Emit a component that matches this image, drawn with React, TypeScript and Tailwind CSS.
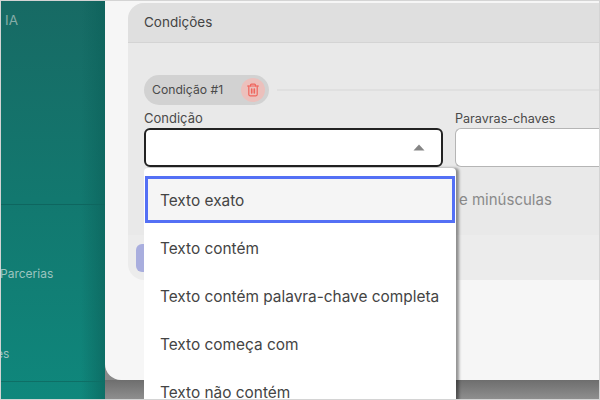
import React from "react";

const font = { fontFamily: "Inter, 'Noto Sans', sans-serif" };

function Trash() {
  return (
    <svg width="14" height="14" viewBox="0 0 14 14" fill="none" stroke="#f0645c" strokeWidth="1.2" strokeLinecap="round" strokeLinejoin="round">
      <path d="M1.5 3h11" />
      <path d="M4.5 3V2.2c0-.6.4-1 1-1h3c.6 0 1 .4 1 1V3" />
      <path d="M2.8 3v8.6c0 .7.5 1.2 1.2 1.2h6c.7 0 1.2-.5 1.2-1.2V3" />
      <path d="M5.7 6v4M8.3 6v4" strokeWidth="1.6" />
    </svg>
  );
}

const items = ["Texto contém", "Texto contém palavra-chave completa", "Texto começa com", "Texto não contém"];

export default function App() {
  return (
    <div className="w-[600px] h-[400px] overflow-hidden flex bg-[#8a8a8a] border border-[#d4d4d4] relative" style={font}>
      <aside className="w-[104px] shrink-0 h-full flex flex-col bg-gradient-to-b from-[#176a64] via-[#12786f] to-[#0f877c] relative">
        <div className="absolute inset-y-0 right-0 w-[24px] bg-gradient-to-r from-transparent to-[#0b5f58]/60" />
        <div className="h-[204px] border-b border-[#0e665f] pt-[10px] text-[13.5px] leading-[18px] text-[#85aca7] relative">
          <span className="pl-[4px]">IA</span>
        </div>
        <div className="h-[177px] border-b border-[#0e6f66] relative flex flex-col text-[12px] text-[#9cc4bf]">
          <span className="mt-[61px] leading-[16px] -ml-px">Parcerias</span>
          <span className="mt-[64px] leading-[16px] -ml-[5px]">es</span>
        </div>
      </aside>
      <main className="flex-1 flex flex-col min-w-0">
        <div className="h-[379px] bg-[#f6f6f6] rounded-bl-[16px] pl-[23px] pt-[2px] overflow-hidden shrink-0">
          <section className="h-[277px] rounded-tl-[16px] rounded-bl-[16px] bg-[#ececec] overflow-hidden flex flex-col">
            <header className="h-[40px] shrink-0 bg-[#dfdfdf] border-b border-[#d4d4d4] pl-[16px] flex items-center text-[13.5px] text-[#444]">
              Condições
            </header>
            <div className="h-[192px] shrink-0 bg-[#e9e9e9] pl-[16px] pt-[32px] flex flex-col">
              <div className="flex items-center">
                <div className="h-[30px] w-[125px] rounded-full bg-[#d2d2d2] pl-[8px] pr-[4px] flex items-center justify-between text-[12.2px] text-[#4a4a4a]">
                  <span className="whitespace-nowrap">Condição #1</span>
                  <span className="w-[24px] h-[24px] shrink-0 rounded-full bg-[#ecc0bc] flex items-center justify-center"><Trash /></span>
                </div>
                <div className="flex-1 h-[2px] bg-[#e0e0e0] ml-[8px]" />
              </div>
              <div className="flex gap-[12px] mt-[5px]">
                <div className="w-[299px] shrink-0">
                  <div className="text-[13px] leading-[17px] text-[#4a4a4a]">Condição</div>
                  <div className="h-[39px] mt-[1px] bg-white rounded-[6px] border-2 border-[#222] flex items-center justify-end pr-[16px]">
                    <svg width="12" height="7" viewBox="0 0 12 7"><path d="M6 .5 11.5 6.5H.5z" fill="#858585" /></svg>
                  </div>
                </div>
                <div className="flex-1">
                  <div className="text-[12.6px] leading-[17px] text-[#4a4a4a]">Paravras-chaves</div>
                  <div className="h-[39px] mt-[1px] bg-white rounded-l-[6px] border border-r-0 border-[#b5b5b5]" />
                </div>
              </div>
              <div className="mt-[23px] pl-[315px] text-[15px] leading-[20px] text-[#8a8a8a] whitespace-nowrap">e minúsculas</div>
            </div>
            <div className="flex-1 pl-[8px] pt-[9px]">
              <div className="w-[40px] h-[28px] rounded-[6px] bg-[#a9aede]" />
            </div>
          </section>
        </div>
        <div className="flex-1 bg-gradient-to-b from-[#6e6e6e] to-[#8e8e8e]" />
      </main>
      <div className="absolute left-[143px] top-[167px] w-[312px] h-[240px] bg-white rounded-t-[4px] shadow-[3px_0_3px_rgba(0,0,0,0.4)] text-[15.4px] text-[#444]">
        <div className="mt-[8px] ml-[1px] mr-[1px] h-[47px] bg-[#f5f5f5] border-[3px] border-[#5470f5] pl-[12px] pt-[2px] flex items-center">Texto exato</div>
        <div className="h-[2px]" />
        {items.map((t) => (
          <div key={t} className="h-[48px] pl-[16px] flex items-center whitespace-nowrap">{t}</div>
        ))}
      </div>
    </div>
  );
}
